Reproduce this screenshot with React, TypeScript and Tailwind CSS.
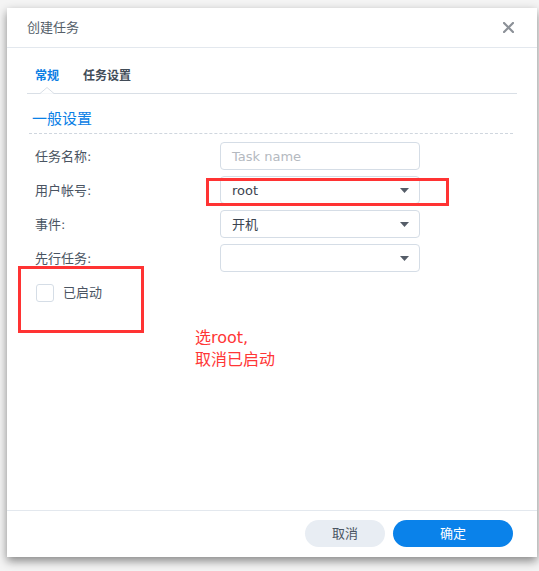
import React from "react";

function Caret() {
  return (
    <svg width="9" height="5" viewBox="0 0 9 5" className="shrink-0">
      <path d="M0 0 H9 L4.5 5 Z" fill="#555d68" />
    </svg>
  );
}

function SelectBox({ value }: { value?: string }) {
  return (
    <div className="w-[200px] h-[28px] rounded-[4px] border border-[#d5dde6] bg-white flex items-center justify-between pl-[11px] pr-[10px]">
      <span className="text-[13px] text-[#3b4450] pt-[1px]">{value}</span>
      <Caret />
    </div>
  );
}

function Row({ label, children }: { label: string; children: React.ReactNode }) {
  return (
    <div className="flex items-center h-[28px]">
      <span className="w-[185px] text-[13px] text-[#4a5462] pt-[2px]">{label}</span>
      {children}
    </div>
  );
}

export default function App() {
  return (
    <div className="relative w-[539px] h-[571px] bg-[#f4f4f4] pl-[7px] pt-[8px] overflow-hidden font-['DejaVu_Sans','Noto_Sans_CJK_SC',sans-serif]">
      <div className="w-[530px] h-[549px] bg-white flex flex-col shadow-[0_4px_9px_rgba(0,0,0,0.45)]">
        {/* header */}
        <div className="h-[40px] shrink-0 border-b border-[#e3e8ee] flex items-center justify-between pl-[20px] pr-[23px]">
          <span className="text-[13px] text-[#555e69] pt-[1px]">创建任务</span>
          <svg width="11" height="11" viewBox="0 0 11 11">
            <path d="M1 1 L10 10 M10 1 L1 10" stroke="#8c9198" strokeWidth="2.2" strokeLinecap="square" />
          </svg>
        </div>

        <div className="pl-[20px] pr-[20px]">
          {/* tabs */}
          <div className="relative mt-[20px] pb-[9px] border-b border-[#d9dfe6] flex gap-[24px] pl-[8px] text-[12px] leading-[16px] font-semibold">
            <span className="text-[#0a7ee4]">常规</span>
            <span className="text-[#414b57]">任务设置</span>
            <svg width="14" height="7" viewBox="0 0 14 7" className="absolute left-[13px] bottom-[-1px]">
              <path d="M0 6.5 L7 0.5 L14 6.5" fill="white" stroke="#d9dfe6" strokeWidth="1" />
              <rect x="0.8" y="6.5" width="12.4" height="1" fill="white" />
            </svg>
          </div>

          {/* section title */}
          <div className="mt-[14px] ml-[2px] mr-[4px] pl-[3px] pt-[1px] pb-[4px] border-b border-dashed border-[#cfd6de] text-[15px] leading-[20px] text-[#0a80e6]">
            一般设置
          </div>

          {/* form */}
          <div className="mt-[8px] pl-[8px] flex flex-col gap-[6px]">
            <Row label="任务名称:">
              <div className="w-[200px] h-[28px] rounded-[4px] border border-[#d5dde6] flex items-center pl-[11px]">
                <span className="text-[13px] text-[#b4b9bf] pt-[1px]">Task name</span>
              </div>
            </Row>
            <Row label="用户帐号:">
              <SelectBox value="root" />
            </Row>
            <Row label="事件:">
              <SelectBox value="开机" />
            </Row>
            <Row label="先行任务:">
              <SelectBox />
            </Row>
          </div>

          <div className="mt-[11px] pl-[9px] flex items-center gap-[9px]">
            <div className="w-[18px] h-[18px] rounded-[3px] border border-[#d5dde6] bg-white" />
            <span className="text-[13px] text-[#4a5462]">已启动</span>
          </div>
        </div>

        {/* footer */}
        <div className="mt-auto border-t border-[#e3e8ee] pt-[9px] pb-[10px] pr-[24px] flex justify-end gap-[8px]">
          <button className="w-[80px] h-[27px] rounded-full bg-[#e8edf3] text-[13px] text-[#4a5462]">取消</button>
          <button className="w-[120px] h-[27px] rounded-full bg-[#0a82ea] text-[13px] text-white">确定</button>
        </div>
      </div>

      {/* annotations */}
      <div className="absolute left-[206px] top-[178px] w-[243px] h-[28px] border-[3px] border-[#ff3333]" />
      <div className="absolute left-[18px] top-[266px] w-[126px] h-[67px] border-[3px] border-[#ff3333]" />
      <div className="absolute left-[195px] top-[327px] text-[16px] leading-[22px] text-[#ff3636]">
        <div>选root,</div>
        <div>取消已启动</div>
      </div>
    </div>
  );
}
